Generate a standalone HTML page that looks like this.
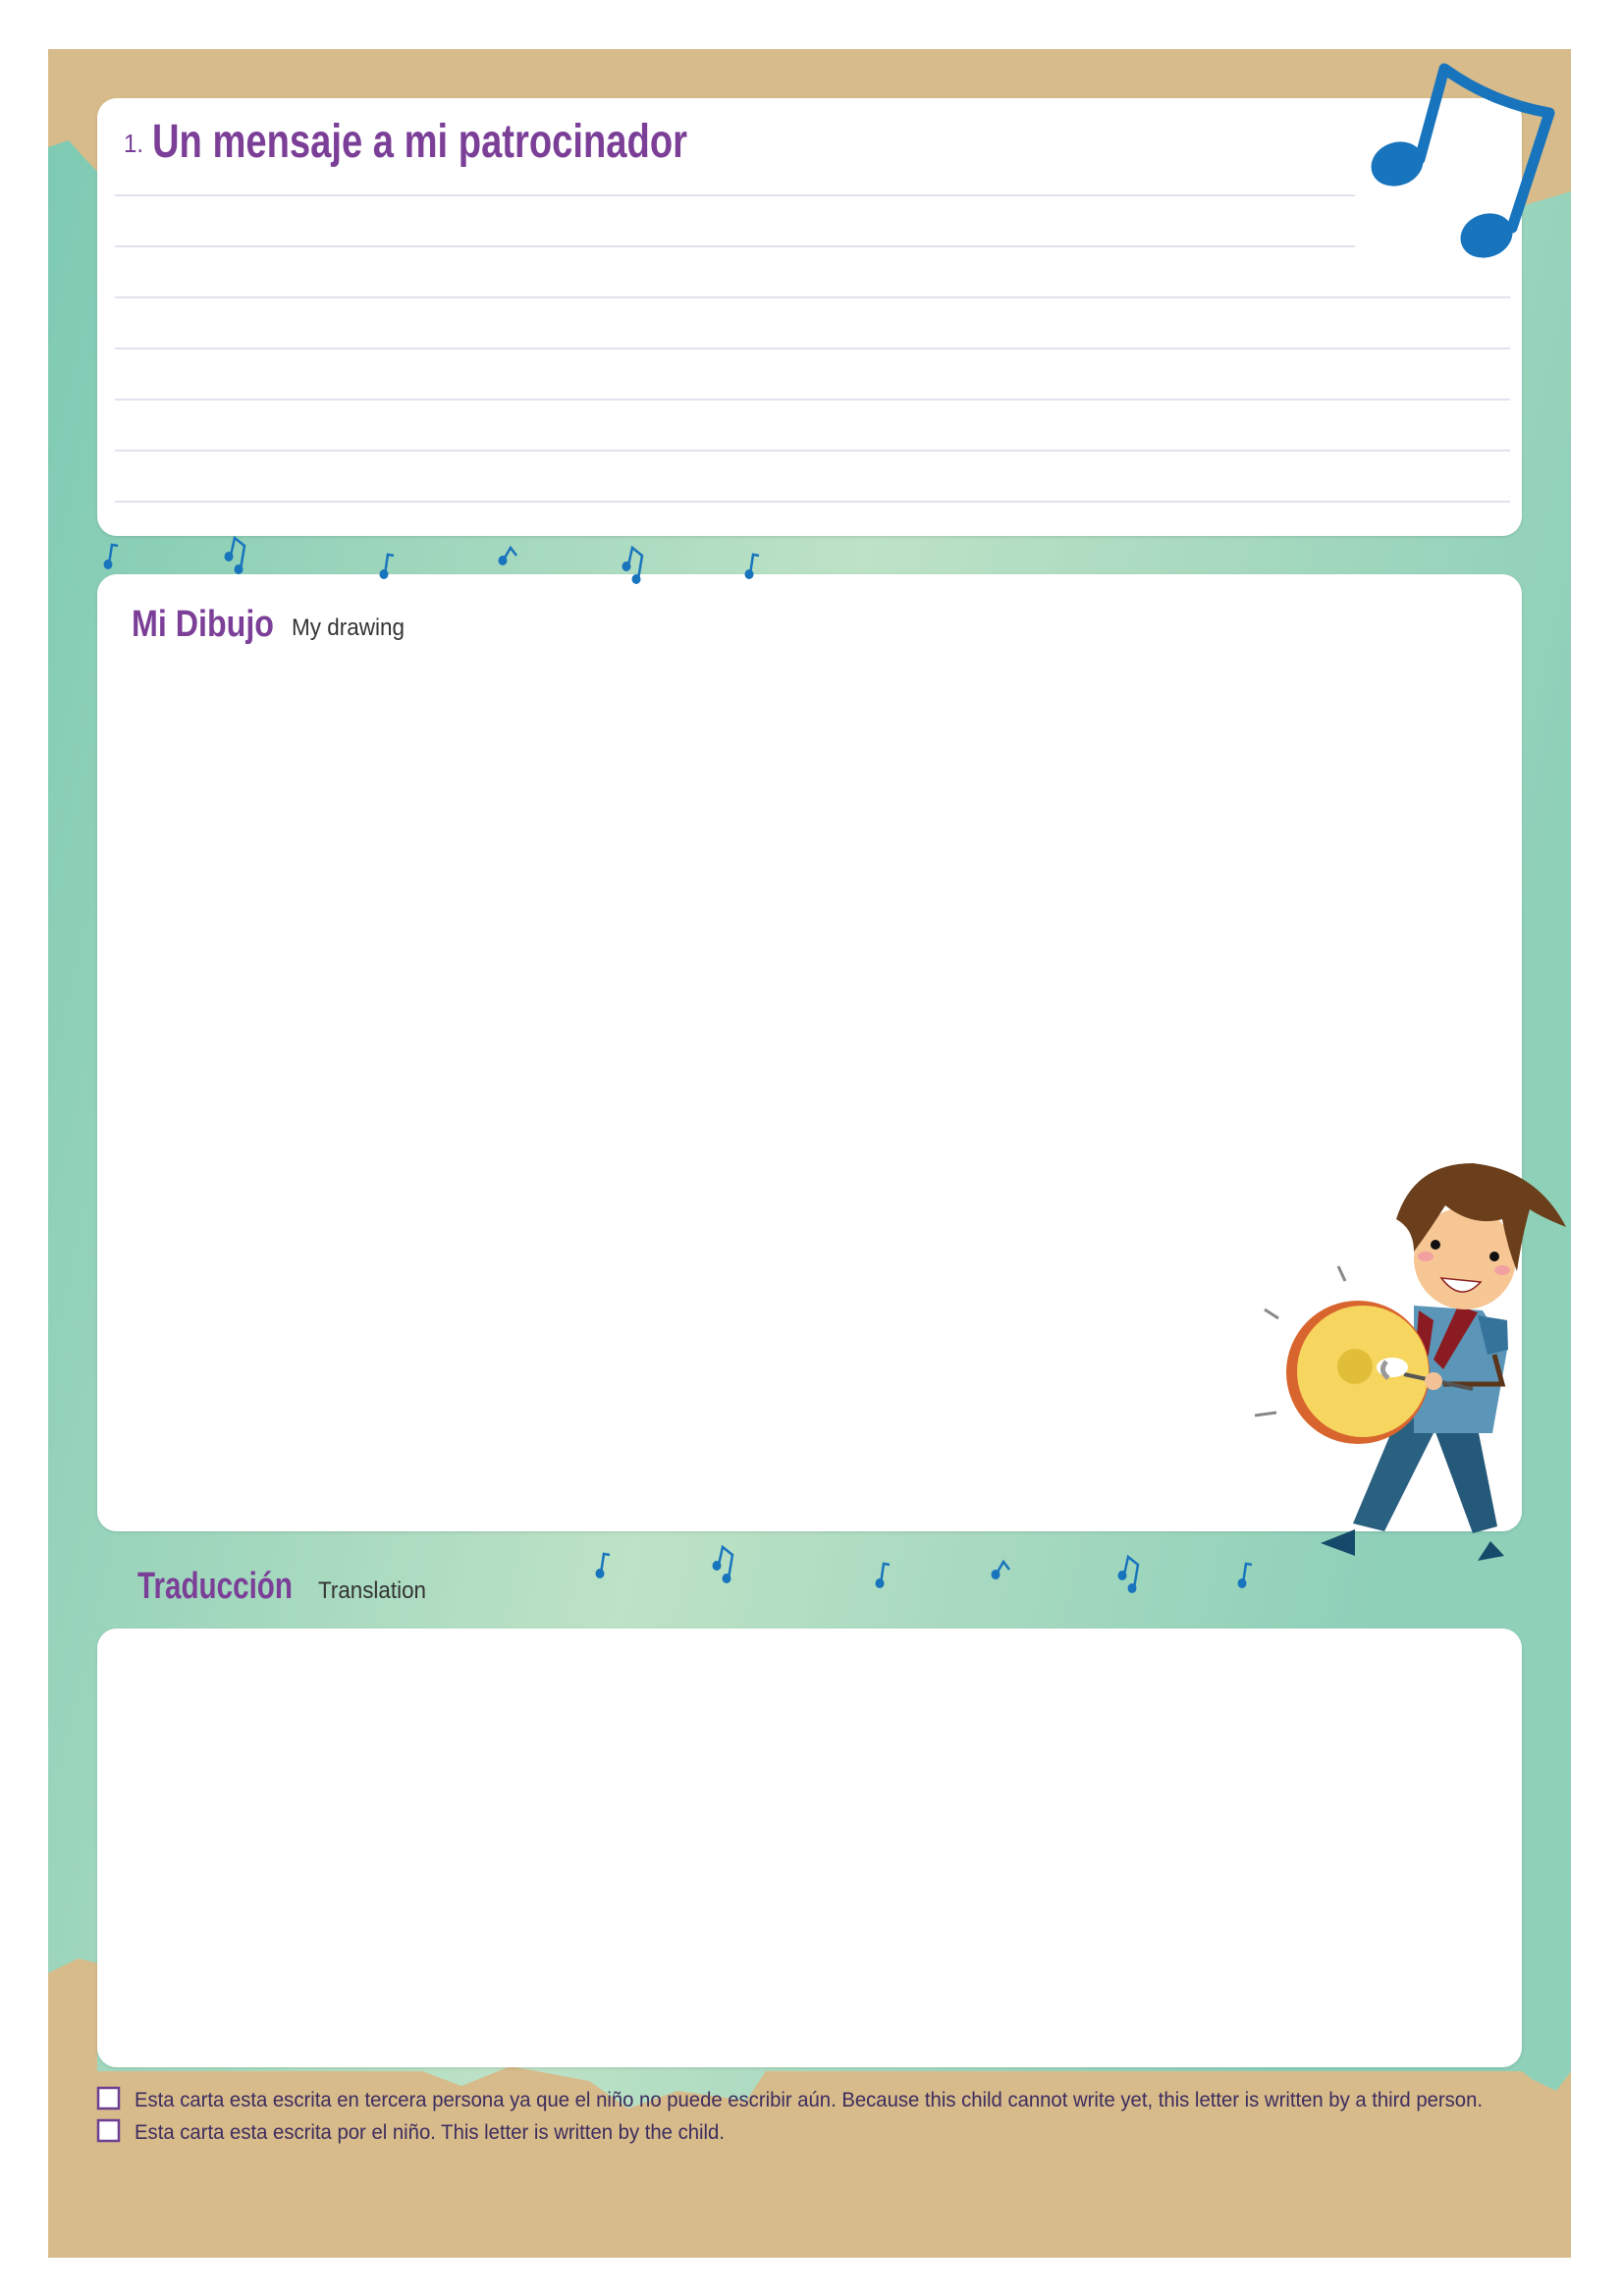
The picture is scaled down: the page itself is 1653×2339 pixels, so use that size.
<!DOCTYPE html>
<html><head><meta charset="utf-8"><style>
html,body{margin:0;padding:0;background:#fff;}
svg{display:block}
</style></head><body>
<svg width="1653" height="2339" viewBox="0 0 1653 2339" xmlns="http://www.w3.org/2000/svg">
<defs>
<linearGradient id="tg" x1="0" y1="0" x2="1" y2="0.3">
<stop offset="0" stop-color="#7ecab3"/>
<stop offset="0.55" stop-color="#bde2c6"/>
<stop offset="1" stop-color="#8fd0b9"/>
</linearGradient>
<filter id="sh" x="-5%" y="-5%" width="110%" height="110%"><feDropShadow dx="0" dy="1" stdDeviation="1.5" flood-color="#000" flood-opacity="0.12"/></filter>
</defs>
<rect x="49" y="50" width="1551" height="2250" fill="#d7bb8b"/>
<path d="M49,150 L70,143 L85,160 L99,175 L1550,175 L1550,210 L1600,195 L1600,2110 L1585,2130 L1560,2118 L1550,2110 L780,2110 L760,2140 L690,2130 L640,2148 L600,2120 L520,2105 L470,2125 L430,2110 L99,2110 L99,2000 L80,1995 L49,2010 Z" fill="url(#tg)"/>

<rect x="99" y="100" width="1451" height="446" rx="20" fill="#fff" filter="url(#sh)"/>
<rect x="99" y="585" width="1451" height="975" rx="20" fill="#fff" filter="url(#sh)"/>
<rect x="99" y="1659" width="1451" height="447" rx="20" fill="#fff" filter="url(#sh)"/>

<g stroke="#e2e1ef" stroke-width="2">
<line x1="117" y1="199" x2="1380" y2="199"/>
<line x1="117" y1="251" x2="1380" y2="251"/>
<line x1="117" y1="303" x2="1538" y2="303"/>
<line x1="117" y1="355" x2="1538" y2="355"/>
<line x1="117" y1="407" x2="1538" y2="407"/>
<line x1="117" y1="459" x2="1538" y2="459"/>
<line x1="117" y1="511" x2="1538" y2="511"/>
</g>

<g font-family="Liberation Sans, sans-serif" fill="#7b3f98" font-weight="bold">
<text x="126" y="155" font-size="26" font-weight="normal" textLength="20" lengthAdjust="spacingAndGlyphs">1.</text>
<text x="155" y="160" font-size="48" textLength="545" lengthAdjust="spacingAndGlyphs">Un mensaje a mi patrocinador</text>
<text x="134" y="648" font-size="38" textLength="145" lengthAdjust="spacingAndGlyphs">Mi Dibujo</text>
<text x="140" y="1628" font-size="38" textLength="158" lengthAdjust="spacingAndGlyphs">Traducción</text>
</g>
<g font-family="Liberation Sans, sans-serif" fill="#333">
<text x="297" y="647" font-size="24" textLength="115" lengthAdjust="spacingAndGlyphs">My drawing</text>
<text x="324" y="1628" font-size="24" textLength="110" lengthAdjust="spacingAndGlyphs">Translation</text>
</g>

<rect x="100" y="2127" width="21" height="21" fill="#fff" stroke="#6d3f92" stroke-width="2.5"/>
<rect x="100" y="2160" width="21" height="21" fill="#fff" stroke="#6d3f92" stroke-width="2.5"/>
<g font-family="Liberation Sans, sans-serif" fill="#3d2c5e" font-size="21">
<text x="137" y="2146" textLength="1373" lengthAdjust="spacingAndGlyphs">Esta carta esta escrita en tercera persona ya que el niño no puede escribir aún. Because this child cannot write yet, this letter is written by a third person.</text>
<text x="137" y="2179" textLength="601" lengthAdjust="spacingAndGlyphs">Esta carta esta escrita por el niño. This letter is written by the child.</text>
</g>

<g fill="#1874bc" stroke="#1874bc" stroke-linecap="round" stroke-linejoin="round">
<path d="M1446,162 L1471,70 Q1520,105 1578,115 L1540,232" fill="none" stroke-width="11"/>
<ellipse cx="1423" cy="167" rx="27" ry="22" transform="rotate(-20 1423 167)" stroke="none"/>
<ellipse cx="1514" cy="240" rx="27" ry="22" transform="rotate(-20 1514 240)" stroke="none"/>
</g>

<defs>
<g id="n1"><path d="M0,0 L3,-20 L9,-19" fill="none" stroke="#1874bc" stroke-width="2.5"/><ellipse cx="-1" cy="0" rx="4.5" ry="5" fill="#1874bc"/></g>
<g id="n2"><path d="M2,-4 L6,-22 L16,-14 L12,10" fill="none" stroke="#1874bc" stroke-width="2.5"/><ellipse cx="0" cy="-3" rx="4.5" ry="5" fill="#1874bc"/><ellipse cx="10" cy="10" rx="4.5" ry="5" fill="#1874bc"/></g>
<g id="n3"><path d="M1,0 L8,-12 L14,-4" fill="none" stroke="#1874bc" stroke-width="2.5"/><ellipse cx="0" cy="1" rx="4.5" ry="5" fill="#1874bc"/></g>
</defs>
<use href="#n1" x="111" y="575"/>
<use href="#n2" x="233" y="570"/>
<use href="#n1" x="392" y="585"/>
<use href="#n3" x="512" y="570"/>
<use href="#n2" x="638" y="580"/>
<use href="#n1" x="764" y="585"/>
<use href="#n1" x="612" y="1603"/>
<use href="#n2" x="730" y="1598"/>
<use href="#n1" x="897" y="1613"/>
<use href="#n3" x="1014" y="1603"/>
<use href="#n2" x="1143" y="1608"/>
<use href="#n1" x="1266" y="1613"/>

<g>
<path d="M1425,1440 L1475,1430 L1410,1560 L1378,1552 Z" fill="#2a6080"/>
<path d="M1455,1440 L1500,1430 L1525,1555 L1500,1562 Z" fill="#25597a"/>
<path d="M1345,1572 L1380,1558 L1380,1585 Z" fill="#154a6a"/>
<path d="M1505,1590 L1518,1570 L1532,1585 Z" fill="#154a6a"/>
<path d="M1440,1330 L1510,1335 L1535,1375 L1520,1460 L1440,1460 Z" fill="#5b96b8"/>
<path d="M1445,1335 L1460,1345 L1455,1380 L1440,1400 Z" fill="#8b1b22"/>
<path d="M1485,1330 L1505,1337 L1470,1395 L1460,1385 Z" fill="#8b1b22"/>
<path d="M1505,1340 L1535,1345 L1536,1375 L1515,1380 Z" fill="#35739a"/>
<path d="M1522,1380 L1530,1410 L1470,1410" fill="none" stroke="#5a3519" stroke-width="5"/>
<circle cx="1383" cy="1398" r="73" fill="#d9652e"/>
<circle cx="1388" cy="1397" r="67" fill="#f6d65f"/>
<circle cx="1380" cy="1392" r="18" fill="#e0be3a"/>
<path d="M1430,1400 L1500,1415" stroke="#555" stroke-width="4"/>
<ellipse cx="1418" cy="1393" rx="16" ry="10" fill="#fff"/>
<path d="M1412,1387 Q1404,1396 1414,1404" stroke="#999" stroke-width="5" fill="none"/>
<circle cx="1460" cy="1407" r="9" fill="#f3c196"/>
<circle cx="1492" cy="1282" r="52" fill="#f6c694"/>
<path d="M1422,1242 Q1440,1185 1500,1185 Q1565,1192 1595,1250 Q1570,1240 1558,1232 Q1550,1260 1545,1295 Q1535,1270 1530,1242 Q1500,1250 1472,1228 Q1455,1255 1440,1275 Q1440,1252 1422,1242 Z" fill="#6b3f1b"/>
<circle cx="1462" cy="1268" r="5" fill="#111"/>
<circle cx="1522" cy="1280" r="5" fill="#111"/>
<ellipse cx="1452" cy="1280" rx="8" ry="5" fill="#f3a0a0"/>
<ellipse cx="1530" cy="1294" rx="8" ry="5" fill="#f3a0a0"/>
<path d="M1468,1302 Q1488,1328 1508,1306 Z" fill="#fff" stroke="#8b2020" stroke-width="1.5"/>
<g stroke="#888" stroke-width="3"><line x1="1363" y1="1290" x2="1370" y2="1305"/><line x1="1288" y1="1334" x2="1302" y2="1343"/><line x1="1278" y1="1442" x2="1300" y2="1439"/></g>
</g>
</svg>
</body></html>
